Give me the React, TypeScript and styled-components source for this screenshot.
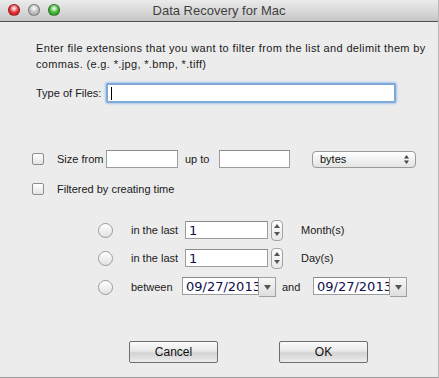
import styled, { createGlobalStyle } from "styled-components"

const GlobalStyle = createGlobalStyle`
    html, body {
        margin: 0;
        padding: 0;
        background: #ececec;
    }
    * {
        box-sizing: border-box;
    }
`

const Window = styled.div`
    width: 439px;
    height: 378px;
    display: flex;
    flex-direction: column;
    background: #ececec;
    border-right: 1px solid #b9b9b9;
    border-bottom: 1px solid #9a9a9a;
    font-family: "Liberation Sans", Arial, sans-serif;
    font-size: 11px;
    color: #1a1a1a;
`

const TitleBar = styled.div`
    height: 22px;
    flex: none;
    display: grid;
    grid-template-columns: 1fr auto 1fr;
    align-items: center;
    background: linear-gradient(#ebebeb, #d6d6d6 60%, #c6c6c6);
    border-bottom: 1px solid #505050;
`

const Lights = styled.div`
    display: flex;
    gap: 8px;
    padding-left: 8px;
    margin-top: -1px;
`

const Light = styled.span<{ $color: string }>`
    width: 12px;
    height: 12px;
    border-radius: 50%;
    background: radial-gradient(circle at 50% 35%, #ffffff 0%, ${p => p.$color} 55%);
    border: 1px solid rgba(0, 0, 0, 0.35);
`

const Title = styled.div`
    font-size: 13px;
    color: #3f3f3f;
    margin-top: -1px;
`

const Content = styled.div`
    flex: 1;
    display: flex;
    flex-direction: column;
    padding-top: 18px;
`

const Description = styled.div`
    padding-left: 36px;
    line-height: 16px;
    letter-spacing: 0.35px;
`

const Row = styled.div<{ $top: number; $left: number; $height?: number }>`
    display: flex;
    align-items: center;
    margin-top: ${p => p.$top}px;
    padding-left: ${p => p.$left}px;
    height: ${p => p.$height ?? 18}px;
`

const Label = styled.span<{ $width?: number; $gap?: number }>`
    flex: none;
    width: ${p => (p.$width ? `${p.$width}px` : "auto")};
    margin-left: ${p => p.$gap ?? 0}px;
    white-space: nowrap;
`

const FocusInput = styled.div`
    width: 290px;
    height: 20px;
    background: #fff;
    border: 2px solid #7ea9d9;
    border-radius: 2px;
    box-shadow: 0 0 2px 1px #a9c8ec;
    display: flex;
    align-items: center;
    padding-left: 3px;
`

const Caret = styled.span`
    width: 1px;
    height: 13px;
    background: #000;
`

const TextBox = styled.div<{ $width: number; $gap?: number }>`
    flex: none;
    width: ${p => p.$width}px;
    height: 18px;
    margin-left: ${p => p.$gap ?? 0}px;
    background: #fff;
    border: 1px solid #9c9c9c;
    border-top-color: #8a8a8a;
    font-family: "DejaVu Sans", Verdana, sans-serif;
    font-size: 13px;
    line-height: 17px;
    color: #10104a;
    padding-left: 3px;
    overflow: hidden;
    white-space: nowrap;
`

const Check = styled.span`
    flex: none;
    width: 12px;
    height: 12px;
    border: 1px solid #8d8d8d;
    border-radius: 2px;
    background: linear-gradient(#ffffff, #e3e3e3);
`

const Radio = styled.span`
    flex: none;
    width: 15px;
    height: 15px;
    border-radius: 50%;
    border: 1px solid #9b9b9b;
    background: linear-gradient(#ffffff, #e2e2e2);
    box-shadow: inset 0 1px 1px rgba(255, 255, 255, 0.9);
`

const Select = styled.div`
    flex: none;
    width: 104px;
    height: 17px;
    margin-left: 22px;
    border: 1px solid #9a9a9a;
    border-radius: 4px;
    background: linear-gradient(#ffffff, #eeeeee 60%, #e4e4e4);
    display: flex;
    align-items: center;
    justify-content: space-between;
    padding: 0 6px 0 7px;
    color: #111;
`

const Updown = styled.svg`
    flex: none;
`

const Spinner = styled.div`
    flex: none;
    width: 12px;
    height: 21px;
    margin-left: 3px;
    border: 1px solid #a3a3a3;
    border-radius: 4px;
    background: linear-gradient(#fdfdfd, #e8e8e8);
    display: flex;
    flex-direction: column;
    align-items: center;
    justify-content: space-around;
    padding: 2px 0;
`

const DateField = styled.div<{ $gap?: number }>`
    flex: none;
    display: flex;
    margin-left: ${p => p.$gap ?? 0}px;
    height: 20px;
`

const DateButton = styled.div`
    width: 17px;
    height: 20px;
    border: 1px solid #a0a0a0;
    border-left: none;
    background: linear-gradient(#f7f7f7, #dedede);
    display: flex;
    align-items: center;
    justify-content: center;
`

const Footer = styled.div`
    margin-top: auto;
    display: flex;
    gap: 61px;
    padding: 0 0 14px 129px;
`

const Button = styled.div`
    width: 89px;
    height: 22px;
    border: 1px solid #6e6e6e;
    border-radius: 2px;
    background: linear-gradient(#fbfbfb, #e8e8e8 45%, #d3d3d3 55%, #ececec);
    display: flex;
    align-items: center;
    justify-content: center;
    font-size: 12px;
    color: #111;
`

const Arrow = ({ up }: { up?: boolean }) => (
    <svg width="6" height="4" viewBox="0 0 6 4">
        <path d={up ? "M0 4 L3 0 L6 4 Z" : "M0 0 L3 4 L6 0 Z"} fill="#555" />
    </svg>
)

const DatePicker = ({ gap }: { gap?: number }) => (
    <DateField $gap={gap}>
        <TextBox $width={77}>09/27/2013</TextBox>
        <DateButton>
            <svg width="7" height="5" viewBox="0 0 7 5">
                <path d="M0 0 L7 0 L3.5 5 Z" fill="#555" />
            </svg>
        </DateButton>
    </DateField>
)

export default function App() {
    return <>
        <GlobalStyle />
        <Window>
            <TitleBar>
                <Lights>
                    <Light $color="#e0262a" />
                    <Light $color="#b8b8b8" />
                    <Light $color="#37b12c" />
                </Lights>
                <Title>Data Recovery for Mac</Title>
                <span />
            </TitleBar>
            <Content>
                <Description>
                    Enter file extensions that you want to filter from the list and delimit them by<br />
                    commas. (e.g. *.jpg, *.bmp, *.tiff)
                </Description>
                <Row $top={11} $left={36} $height={20}>
                    <Label $width={70}>Type of Files:</Label>
                    <FocusInput><Caret /></FocusInput>
                </Row>
                <Row $top={47} $left={32}>
                    <Check />
                    <Label $width={49} $gap={13}>Size from</Label>
                    <TextBox $width={72} />
                    <Label $width={34} $gap={7}>up to</Label>
                    <TextBox $width={71} />
                    <Select>
                        <span>bytes</span>
                        <Updown width="5" height="9" viewBox="0 0 5 9">
                            <path d="M0 3.5 L2.5 0 L5 3.5 Z M0 5.5 L2.5 9 L5 5.5 Z" fill="#444" />
                        </Updown>
                    </Select>
                </Row>
                <Row $top={12} $left={32}>
                    <Check />
                    <Label $gap={13}>Filtered by creating time</Label>
                </Row>
                <Row $top={21} $left={98} $height={22}>
                    <Radio />
                    <Label $width={54} $gap={18}>in the last</Label>
                    <TextBox $width={83}>1</TextBox>
                    <Spinner><Arrow up /><Arrow /></Spinner>
                    <Label $gap={18}>Month(s)</Label>
                </Row>
                <Row $top={6} $left={98} $height={22}>
                    <Radio />
                    <Label $width={54} $gap={18}>in the last</Label>
                    <TextBox $width={83}>1</TextBox>
                    <Spinner><Arrow up /><Arrow /></Spinner>
                    <Label $gap={18}>Day(s)</Label>
                </Row>
                <Row $top={7} $left={98} $height={22}>
                    <Radio />
                    <Label $width={51} $gap={18}>between</Label>
                    <DatePicker />
                    <Label $width={31} $gap={6}>and</Label>
                    <DatePicker />
                </Row>
                <Footer>
                    <Button>Cancel</Button>
                    <Button>OK</Button>
                </Footer>
            </Content>
        </Window>
    </>
}
